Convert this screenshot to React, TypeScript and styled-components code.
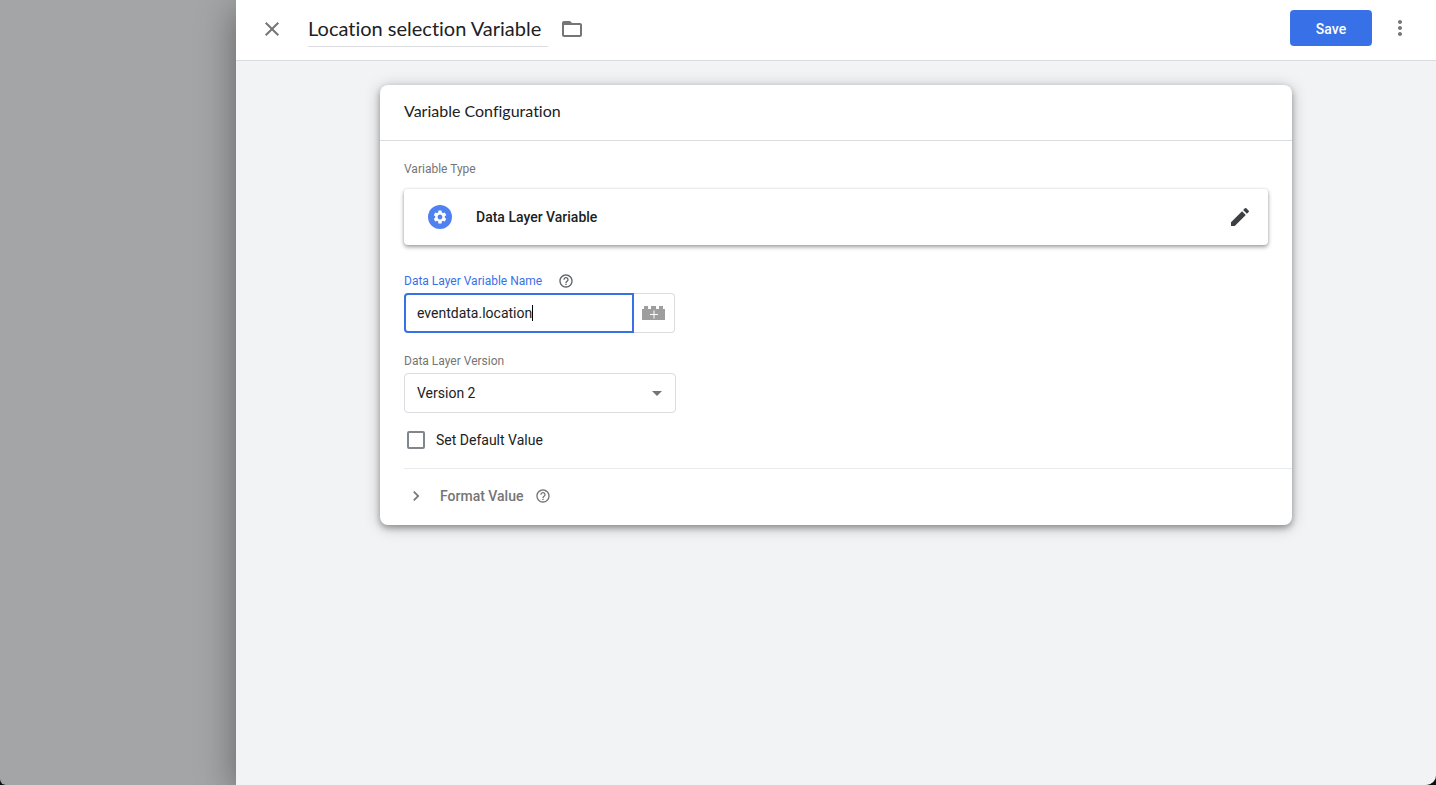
import React from 'react';
import styled, { createGlobalStyle } from 'styled-components';
import {
  MdChevronRight,
  MdClose,
  MdEdit,
  MdFolderOpen,
  MdHelpOutline,
  MdMoreVert,
  MdSettings,
} from 'react-icons/md';

const GlobalStyle = createGlobalStyle`
  *, *::before, *::after { box-sizing: border-box; }
  body {
    margin: 0;
    background: #101010;
    color: #202124;
    font-family: Roboto, "Liberation Sans", sans-serif;
    font-size: 14px;
  }
  button, input, select { font: inherit; color: inherit; margin: 0; }
  svg { display: block; flex: none; }
`;

const Page = styled.div`
  display: flex;
  min-height: 100vh;
  overflow: hidden;
  border-radius: 0 0 10px 6px;
  background: #a4a5a7;
`;

const Scrim = styled.div`
  flex: 0 0 236px;
`;

const Sheet = styled.main`
  flex: 1;
  min-width: 0;
  background: #f1f3f5;
  box-shadow: 0 8px 36px rgba(0, 0, 0, 0.4);
`;

const TopBar = styled.header`
  display: flex;
  align-items: center;
  height: 61px;
  padding: 0 24px 2px;
  background: #fff;
  border-bottom: 1px solid #dadce0;
`;

const IconButton = styled.button`
  display: flex;
  align-items: center;
  justify-content: center;
  width: 24px;
  height: 24px;
  padding: 0;
  border: 0;
  background: none;
  color: ${(p) => p.color || '#757575'};
  cursor: pointer;
`;

const Title = styled.h1`
  margin: 0 12px 0 24px;
  padding-top: 4px;
  height: 36px;
  min-width: 240px;
  border-bottom: 1px solid #dadce0;
  font-family: Lato, Roboto, sans-serif;
  font-size: 20px;
  font-weight: 400;
  font-variant-ligatures: none;
  line-height: 26px;
  white-space: nowrap;
`;

const Actions = styled.div`
  display: flex;
  align-items: center;
  gap: 16px;
  margin-left: auto;
  padding-bottom: 2px;
`;

const SaveButton = styled.button`
  width: 82px;
  height: 36px;
  padding: 2px 0 0;
  border: 0;
  border-radius: 4px;
  background: #3870e8;
  color: #fff;
  font-weight: 500;
  cursor: pointer;
`;

const Content = styled.div`
  padding: 24px 12%;
`;

const Card = styled.section`
  border-radius: 8px;
  background: #fff;
  box-shadow: 0 3px 6px rgba(0, 0, 0, 0.32), 0 2px 16px rgba(0, 0, 0, 0.22);
`;

const CardTitle = styled.h2`
  margin: 0;
  height: 56px;
  padding: 0 24px;
  border-bottom: 1px solid #dadce0;
  font-family: Lato, Roboto, sans-serif;
  font-size: 16px;
  font-weight: 400;
  font-variant-ligatures: none;
  line-height: 52px;
`;

const CardBody = styled.div`
  padding: 20px 24px 0;
`;

const Caption = styled.div<{ $active?: boolean }>`
  display: flex;
  align-items: center;
  gap: 16px;
  height: 16px;
  margin-bottom: 4px;
  font-size: 12px;
  line-height: 16px;
  color: ${(p) => (p.$active ? '#3870e8' : '#757575')};
`;

const TypeRow = styled.div`
  display: flex;
  align-items: center;
  gap: 24px;
  height: 56px;
  margin: 12px 0 28px;
  padding: 0 16px 0 24px;
  border-radius: 4px;
  box-shadow: 0 2px 4px rgba(0, 0, 0, 0.38), 0 0 3px rgba(0, 0, 0, 0.08);
  font-weight: 500;

  button { margin-left: auto; }
`;

const TypeBadge = styled.span`
  display: flex;
  align-items: center;
  justify-content: center;
  width: 24px;
  height: 24px;
  border-radius: 50%;
  background: #4f82f0;
  color: #fff;
`;

const Field = styled.div`
  width: 272px;
  margin-bottom: 20px;
`;

const InputGroup = styled.div`
  display: flex;
  position: relative;
  height: 40px;
`;

const TextInput = styled.input`
  width: 230px;
  padding: 0 11px;
  border: 2px solid #3870e8;
  border-radius: 4px 0 0 4px;
  outline: 0;
  background: #fff;
  caret-color: transparent;
`;

const Caret = styled.span`
  position: absolute;
  top: 12px;
  left: 128px;
  width: 1px;
  height: 16px;
  background: #000;
`;

const BrickButton = styled.button`
  display: flex;
  align-items: center;
  justify-content: center;
  width: 41px;
  padding: 0;
  border: 1px solid #dadce0;
  border-left: 0;
  border-radius: 0 4px 4px 0;
  background: #fff;
  cursor: pointer;
`;

const SelectBox = styled.div`
  position: relative;

  svg {
    position: absolute;
    top: 18px;
    right: 14px;
    pointer-events: none;
  }
`;

const Select = styled.select`
  width: 100%;
  height: 40px;
  padding: 0 12px;
  border: 1px solid #dadce0;
  border-radius: 4px;
  appearance: none;
  background: #fff;
`;

const CheckRow = styled.label`
  display: flex;
  align-items: center;
  gap: 11px;
  height: 18px;
  margin: -2px 0 19px 3px;
`;

const Checkbox = styled.input`
  width: 18px;
  height: 18px;
  appearance: none;
  border: 2px solid #80868b;
  border-radius: 2px;
  background: #fff;
`;

const FormatRow = styled.div`
  display: flex;
  align-items: center;
  height: 57px;
  margin-left: 24px;
  padding-bottom: 2px;
  border-top: 1px solid #e8eaed;
`;

const FormatToggle = styled.button`
  display: flex;
  align-items: center;
  gap: 14px;
  padding: 0 12px 0 2px;
  border: 0;
  background: none;
  color: #757575;
  font-weight: 500;
  cursor: pointer;
`;

const BrickIcon = () => (
  <svg width="24" height="16" viewBox="0 0 24 16" aria-hidden="true">
    <path
      d="M0 15V4h2V1h4v3h3V1h5v3h3V1h4v3h2v11z"
      fill="#9e9e9e"
    />
    <path d="M8 9.5h8M12 5.5v8" stroke="#fff" strokeWidth="1" fill="none" />
  </svg>
);

export default function App() {
  return (
    <Page>
      <GlobalStyle />
      <Scrim />
      <Sheet>
        <TopBar>
          <IconButton aria-label="Close"><MdClose size={24} /></IconButton>
          <Title>Location selection Variable</Title>
          <IconButton aria-label="Move to folder"><MdFolderOpen size={24} /></IconButton>
          <Actions>
            <SaveButton>Save</SaveButton>
            <IconButton aria-label="More actions"><MdMoreVert size={24} /></IconButton>
          </Actions>
        </TopBar>
        <Content>
          <Card>
            <CardTitle>Variable Configuration</CardTitle>
            <CardBody>
              <Caption>Variable Type</Caption>
              <TypeRow>
                <TypeBadge><MdSettings size={16} /></TypeBadge>
                <span>Data Layer Variable</span>
                <IconButton color="#3c4043" aria-label="Edit type"><MdEdit size={24} /></IconButton>
              </TypeRow>
              <Field>
                <Caption $active>
                  <label htmlFor="variable-name">Data Layer Variable Name</label>
                  <MdHelpOutline size={16} color="#5f6368" />
                </Caption>
                <InputGroup>
                  <TextInput id="variable-name" defaultValue="eventdata.location" />
                  <Caret />
                  <BrickButton aria-label="Insert variable"><BrickIcon /></BrickButton>
                </InputGroup>
              </Field>
              <Field>
                <Caption>
                  <label htmlFor="version">Data Layer Version</label>
                </Caption>
                <SelectBox>
                  <Select id="version" defaultValue="2">
                    <option value="1">Version 1</option>
                    <option value="2">Version 2</option>
                  </Select>
                  <svg width="10" height="5" viewBox="0 0 10 5" aria-hidden="true">
                    <path d="M0 0h10L5 5z" fill="#757575" />
                  </svg>
                </SelectBox>
              </Field>
              <CheckRow>
                <Checkbox type="checkbox" />
                Set Default Value
              </CheckRow>
            </CardBody>
            <FormatRow>
              <FormatToggle aria-expanded="false">
                <MdChevronRight size={20} />
                Format Value
              </FormatToggle>
              <MdHelpOutline size={16} color="#757575" />
            </FormatRow>
          </Card>
        </Content>
      </Sheet>
    </Page>
  );
}
